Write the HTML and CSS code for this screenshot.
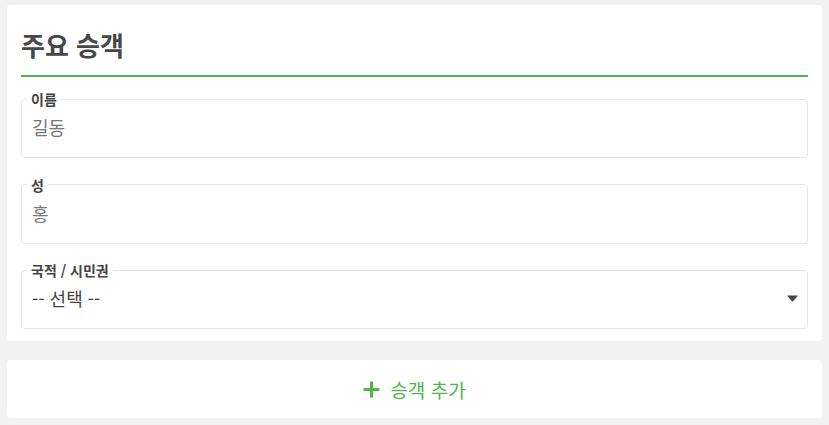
FILE: index.html
```html
<!DOCTYPE html>
<html lang="ko">
<head>
<meta charset="utf-8">
<title>주요 승객</title>
<link rel="stylesheet" href="styles.css">
</head>
<body>
<main class="page">
  <section class="card">
    <h2 class="card-title">주요 승객</h2>
    <fieldset class="field">
      <legend class="field-label">이름</legend>
      <input class="field-input" type="text" value="길동">
    </fieldset>
    <fieldset class="field">
      <legend class="field-label">성</legend>
      <input class="field-input" type="text" value="홍">
    </fieldset>
    <fieldset class="field">
      <legend class="field-label">국적 / 시민권</legend>
      <div class="select-wrap">
        <select class="field-select">
          <option>-- 선택 --</option>
        </select>
        <svg class="caret" width="11" height="7" viewBox="0 0 11 7" aria-hidden="true">
          <path d="M0.6 0.5 H10.4 Q11 0.5 10.6 1 L6 6.2 Q5.5 6.7 5 6.2 L0.4 1 Q0 0.5 0.6 0.5 Z" fill="#444"/>
        </svg>
      </div>
    </fieldset>
  </section>
  <section class="card add-card">
    <button class="add-btn" type="button">
      <svg class="plus" width="17" height="17" viewBox="0 0 17 17" aria-hidden="true">
        <path d="M8.5 0.5 V16.5 M0.5 8.5 H16.5" stroke="#4cb84c" stroke-width="3"/>
      </svg>
      <span>승객 추가</span>
    </button>
  </section>
</main>
</body>
</html>
```
FILE: styles.css
```css
* { box-sizing: border-box; }
html, body { margin: 0; padding: 0; }
body {
  background: #f2f2f2;
  font-family: "Noto Sans CJK KR", "Noto Sans", sans-serif;
  color: #444;
}
.page {
  padding: 5px 7px 7px;
  display: flex;
  flex-direction: column;
  gap: 19px;
}
.card {
  background: #fff;
  border-radius: 4px;
  padding: 14px 14px 12px;
  display: flex;
  flex-direction: column;
}
.card-title {
  margin: 0 0 14px;
  font-size: 26px;
  font-weight: 700;
  line-height: 36px;
  padding: 8px 0 12px;
  color: #474747;
  border-bottom: 2px solid #4cb84c;
}
.field {
  margin: 0 0 18.5px;
  padding: 0 5px 10px;
  border: 1px solid #e6e6e6;
  border-radius: 4px;
  min-width: 0;
}
.field:last-of-type { margin-bottom: 0; }
.field-label {
  padding: 0 4px;
  font-size: 14px;
  font-weight: 700;
  line-height: 16px;
  color: #444;
}
.field-input {
  display: block;
  width: 100%;
  height: 40px;
  border: 0;
  outline: none;
  padding: 0 5px;
  font-family: inherit;
  font-size: 18px;
  color: #777;
  background: transparent;
}
.select-wrap {
  display: flex;
  align-items: center;
  height: 40px;
}
.field-select {
  flex: 1;
  height: 40px;
  border: 0;
  outline: none;
  padding: 0 5px;
  font-family: inherit;
  font-size: 18px;
  color: #444;
  background: transparent;
  appearance: none;
  -webkit-appearance: none;
}
.caret { margin: 1px 4px 0 0; flex: none; }
.add-card {
  padding: 0;
  height: 58px;
  align-items: center;
  justify-content: center;
}
.add-btn {
  display: flex;
  align-items: center;
  gap: 10px;
  border: 0;
  background: transparent;
  padding: 0;
  font-family: inherit;
  font-size: 19px;
  color: #4cb84c;
  cursor: pointer;
}
```
